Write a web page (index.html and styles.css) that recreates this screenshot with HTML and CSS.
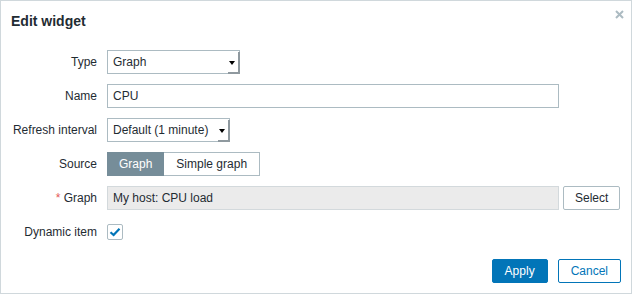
FILE: index.html
```html
<!DOCTYPE html>
<html lang="en">
<head>
  <meta charset="UTF-8">
  <title>Edit widget</title>
  <link rel="stylesheet" href="styles.css">
</head>
<body>

  <div class="dialog">
    <div class="dialog-header">
      <h4>Edit widget</h4>
      <span class="close">
        <svg width="9" height="9" viewBox="0 0 9 9"><path d="M1 1 L8 8 M8 1 L1 8" stroke="#acbbc2" stroke-width="2"/></svg>
      </span>
    </div>

    <form class="widget-form">
      <label class="form-label">Type</label>
      <div class="form-field">
        <div class="select select-type">Graph</div>
      </div>

      <label class="form-label">Name</label>
      <div class="form-field">
        <div class="text-input">CPU</div>
      </div>

      <label class="form-label">Refresh interval</label>
      <div class="form-field">
        <div class="select select-refresh">Default (1 minute)</div>
      </div>

      <label class="form-label">Source</label>
      <div class="form-field">
        <div class="segmented">
          <span class="segment active">Graph</span>
          <span class="segment">Simple graph</span>
        </div>
      </div>

      <label class="form-label"><span class="required">*</span> Graph</label>
      <div class="form-field">
        <div class="text-input readonly">My host: CPU load</div>
        <button type="button" class="btn-alt btn-select">Select</button>
      </div>

      <label class="form-label">Dynamic item</label>
      <div class="form-field">
        <span class="checkbox">
          <svg width="12" height="10" viewBox="0 0 12 10"><path d="M1.5 5.2 L4.6 8 L10.5 1.8" fill="none" stroke="#0275b8" stroke-width="2.2"/></svg>
        </span>
      </div>
    </form>

    <div class="dialog-footer">
      <button type="button" class="btn-primary">Apply</button>
      <button type="button" class="btn-alt btn-cancel">Cancel</button>
    </div>
  </div>

</body>
</html>
```

FILE: styles.css
```css
body {
  margin: 0;
  font-family: "Liberation Sans", Arial, sans-serif;
  font-size: 12px;
  color: #1f2c33;
  background: #fff;
}
.dialog {
  box-sizing: border-box;
  width: 632px;
  height: 294px;
  border: 1px solid #d0d8dc;
  display: flex;
  flex-direction: column;
}
.dialog-header {
  display: flex;
  justify-content: space-between;
  padding: 12px 7px 0 10px;
}
.dialog-header h4 {
  margin: 0;
  font-size: 14px;
  line-height: 16px;
  font-weight: bold;
  color: #1f2c33;
}
.close {
  display: block;
  height: 9px;
  margin-top: -3px;
}
.close svg {
  display: block;
}
.widget-form {
  display: grid;
  grid-template-columns: 86px 1fr;
  column-gap: 10px;
  row-gap: 10px;
  margin: 21px 0 0 10px;
}
.form-label {
  text-align: right;
  line-height: 24px;
  white-space: nowrap;
}
.required {
  color: #e45959;
}
.form-field {
  display: flex;
  align-items: center;
  height: 24px;
}
.select,
.text-input {
  box-sizing: border-box;
  height: 24px;
  line-height: 22px;
  border: 1px solid #acbbc2;
  padding: 0 5px;
  background: #fff;
}
.select {
  position: relative;
}
.select::after {
  content: "";
  position: absolute;
  right: -1px;
  bottom: -1px;
  width: 10px;
  height: 20px;
  border-right: 2px solid #8f999f;
  border-bottom: 2px solid #8f999f;
}
.select::before {
  content: "";
  position: absolute;
  right: 4px;
  top: 10px;
  border-left: 3px solid transparent;
  border-right: 3px solid transparent;
  border-top: 4px solid #000;
}
.select-type {
  width: 133px;
}
.select-refresh {
  width: 123px;
}
.text-input {
  width: 452px;
}
.text-input.readonly {
  background: #ebebeb;
  border-color: #d3d9dc;
}
.segmented {
  display: flex;
  height: 24px;
}
.segment {
  box-sizing: border-box;
  height: 24px;
  line-height: 22px;
  padding: 0 12px;
  border: 1px solid #acbbc2;
  background: #fff;
}
.segment.active {
  background: #768d99;
  border-color: #768d99;
  color: #fff;
  padding: 0 11px;
}
.segment + .segment {
  border-left: none;
}
button {
  font-family: inherit;
  font-size: 12px;
  box-sizing: border-box;
  height: 24px;
  padding: 0 12px;
  border-radius: 2px;
  cursor: pointer;
}
.btn-alt {
  background: #fff;
  border: 1px solid #acbbc2;
  color: #1f2c33;
}
.btn-select {
  margin-left: 4px;
  padding: 0 11px;
}
.checkbox {
  box-sizing: border-box;
  width: 16px;
  height: 16px;
  border: 1px solid #acbbc2;
  border-radius: 2px;
  display: flex;
  align-items: center;
  justify-content: center;
}
.dialog-footer {
  margin-top: auto;
  display: flex;
  justify-content: flex-end;
  gap: 10px;
  padding: 0 10px 10px 0;
}
.btn-primary {
  background: #0275b8;
  border: 1px solid #0275b8;
  color: #fff;
}
.btn-cancel {
  border-color: #0275b8;
  color: #0275b8;
}
```
